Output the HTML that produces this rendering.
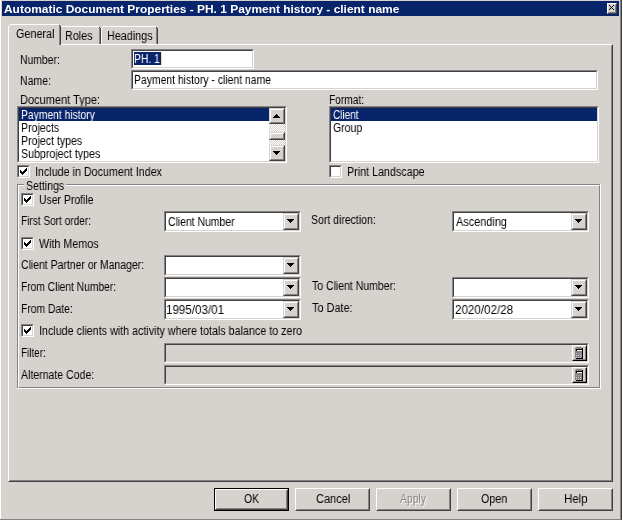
<!DOCTYPE html>
<html>
<head>
<meta charset="utf-8">
<title>Automatic Document Properties</title>
<style>
html,body{margin:0;padding:0;}
body{width:623px;height:520px;background:#d6d3ce;position:relative;overflow:hidden;
 font-family:"Liberation Sans",sans-serif;font-size:12px;color:#000;}
*{box-sizing:border-box;}
.abs,.t{position:absolute;}
.t{white-space:nowrap;line-height:16px;height:16px;transform-origin:0 0;will-change:transform;}
/* window frame */
#wl{left:0;top:0;width:1px;height:520px;background:#fff;}
#wt{left:0;top:0;width:623px;height:1px;background:#fff;}
#wr1{left:620px;top:0;width:1px;height:520px;background:#848284;}
#wr2{left:621px;top:0;width:1px;height:520px;background:#424142;}
#wb{left:0;top:519px;width:620px;height:1px;background:#848284;}
#title{left:2px;top:1px;width:617px;height:15px;background:#08246b;}
/* generic 3d */
.sunken{border:1px solid;border-color:#848284 #fff #fff #848284;background:#fff;}
.sunken:before{content:"";position:absolute;left:0;top:0;right:0;bottom:0;border:1px solid;border-color:#424142 #d6d3ce #d6d3ce #424142;}
.sunken.dis{background:#d6d3ce;}
.raised{border:1px solid;border-color:#fff #424142 #424142 #fff;background:#d6d3ce;}
.raised:before{content:"";position:absolute;left:0;top:0;right:0;bottom:0;border:1px solid;border-color:#d6d3ce #848284 #848284 #d6d3ce;}
.raised.blk{border-color:#fff #000 #000 #fff;}
.sbtn{border:1px solid;border-color:#d6d3ce #424142 #424142 #d6d3ce;background:#d6d3ce;}
.sbtn:before{content:"";position:absolute;left:0;top:0;right:0;bottom:0;border:1px solid;border-color:#fff #848284 #848284 #fff;}
.ar{position:absolute;left:3px;top:5px;display:block;}
.sel{background:#08246b;}
.chk{width:13px;height:13px;}
.chk svg{position:absolute;left:-1px;top:-1px;}
.cb{width:137px;height:21px;}
.cb .sbtn{left:118px;top:1px;width:16px;height:17px;}
</style>
</head>
<body>
<!-- frame -->
<div class="abs" id="wl"></div>
<div class="abs" style="left:622px;top:0;width:1px;height:520px;background:#fff;"></div><div class="abs" id="wr1"></div><div class="abs" id="wr2"></div><div class="abs" id="wb"></div>
<div class="abs" id="title"></div>
<span class="t" style="left:4.00px;top:1px;font-size:11px;transform:scaleX(1.0852);font-weight:bold;color:#fff;">Automatic Document Properties - PH. 1 Payment history - client name</span>
<!-- close button -->
<div class="abs raised" style="left:607px;top:3px;width:10px;height:11px;">
<svg class="abs" style="left:-1px;top:-1px" width="10" height="11" viewBox="0 0 10 11" shape-rendering="crispEdges"><path d="M2 2h1v1h-1zM3 3h1v1h-1zM4 4h1v1h-1zM5 5h1v1h-1zM6 6h1v1h-1zM6 2h1v1h-1zM5 3h1v1h-1zM3 5h1v1h-1zM2 6h1v1h-1z" fill="#000"/></svg>
</div>

<!-- tab pane -->
<div class="abs" style="left:8px;top:44px;width:605px;height:438px;border:1px solid;border-color:#fff #424142 #424142 #fff;"></div>
<div class="abs" style="left:9px;top:45px;width:603px;height:436px;border:1px solid;border-color:#d6d3ce #848284 #848284 #d6d3ce;"></div>
<!-- tabs -->
<div class="abs" style="left:9px;top:44px;width:50px;height:1px;background:#d6d3ce;"></div><div class="abs" style="left:10px;top:24px;width:49px;height:1px;background:#fff;"></div><div class="abs" style="left:9px;top:25px;width:1px;height:1px;background:#fff;"></div><div class="abs" style="left:8px;top:26px;width:1px;height:19px;background:#fff;"></div><div class="abs" style="left:59px;top:25px;width:1px;height:1px;background:#424142;"></div><div class="abs" style="left:59px;top:26px;width:1px;height:19px;background:#848284;"></div><div class="abs" style="left:60px;top:26px;width:1px;height:19px;background:#424142;"></div>
<div class="abs" style="left:61px;top:26px;width:38px;height:1px;background:#fff;"></div><div class="abs" style="left:99px;top:27px;width:1px;height:1px;background:#424142;"></div><div class="abs" style="left:99px;top:28px;width:1px;height:16px;background:#848284;"></div><div class="abs" style="left:100px;top:28px;width:1px;height:16px;background:#424142;"></div>
<div class="abs" style="left:101px;top:28px;width:1px;height:16px;background:#fff;"></div><div class="abs" style="left:102px;top:27px;width:1px;height:1px;background:#fff;"></div><div class="abs" style="left:103px;top:26px;width:53px;height:1px;background:#fff;"></div><div class="abs" style="left:156px;top:27px;width:1px;height:1px;background:#424142;"></div><div class="abs" style="left:156px;top:28px;width:1px;height:16px;background:#848284;"></div><div class="abs" style="left:157px;top:28px;width:1px;height:16px;background:#424142;"></div>
<span class="t" style="left:16.10px;top:26px;font-size:12px;transform:scaleX(0.9024);">General</span><span class="t" style="left:65.10px;top:28px;font-size:12px;transform:scaleX(0.8966);">Roles</span><span class="t" style="left:107.10px;top:28px;font-size:12px;transform:scaleX(0.8980);">Headings</span>

<!-- Number / Name -->
<span class="t" style="left:20.14px;top:52px;font-size:12px;transform:scaleX(0.8636);">Number:</span><span class="t" style="left:20.12px;top:73px;font-size:12px;transform:scaleX(0.8788);">Name:</span>
<div class="abs sunken" style="left:131px;top:49px;width:123px;height:20px;"></div>
<div class="abs sel" style="left:134px;top:52px;width:27px;height:13px;"></div>
<div class="abs" style="left:161px;top:52px;width:1px;height:13px;background:#f5db95;"></div>
<span class="t" style="left:134.14px;top:51px;font-size:12px;transform:scaleX(0.8621);color:#fff;">PH. 1</span>
<div class="abs sunken" style="left:131px;top:70px;width:467px;height:20px;"></div>
<span class="t" style="left:134.13px;top:72px;font-size:12px;transform:scaleX(0.8662);">Payment history - client name</span>

<!-- Document Type -->
<span class="t" style="left:20.08px;top:92px;font-size:12px;transform:scaleX(0.9176);">Document Type:</span>
<div class="abs sunken" style="left:17px;top:106px;width:270px;height:57px;"></div>
<div class="abs sel" style="left:19px;top:108px;width:250px;height:13px;"></div>
<div class="abs" style="left:0;top:0;width:269px;height:160px;overflow:hidden;"><span class="t" style="left:21.14px;top:107px;font-size:12px;transform:scaleX(0.8588);color:#fff;">Payment history</span><span class="t" style="left:21.12px;top:120px;font-size:12px;transform:scaleX(0.8810);">Projects</span><span class="t" style="left:21.12px;top:133px;font-size:12px;transform:scaleX(0.8824);">Project types</span><span class="t" style="left:21.11px;top:146px;font-size:12px;transform:scaleX(0.8864);">Subproject types</span></div>
<!-- scrollbar -->
<div class="abs" style="left:269px;top:108px;width:16px;height:53px;background:repeating-conic-gradient(#fff 0% 25%,#d6d3ce 0% 50%) 0 0/2px 2px;"></div>
<div class="abs sbtn" style="left:269px;top:108px;width:16px;height:16px;"><svg class="ar" width="7" height="4" viewBox="0 0 7 4" shape-rendering="crispEdges"><path d="M3 0h1v1h1v1h1v1h1v1h-7v-1h1v-1h1v-1h1z" fill="#000"/></svg></div>
<div class="abs sbtn" style="left:269px;top:132px;width:16px;height:8px;"></div>
<div class="abs sbtn" style="left:269px;top:145px;width:16px;height:16px;"><svg class="ar" width="7" height="4" viewBox="0 0 7 4" shape-rendering="crispEdges"><path d="M0 0h7v1h-1v1h-1v1h-1v1h-1v-1h-1v-1h-1v-1h-1z" fill="#000"/></svg></div>

<!-- Format -->
<span class="t" style="left:329.15px;top:92px;font-size:12px;transform:scaleX(0.8462);">Format:</span>
<div class="abs sunken" style="left:329px;top:106px;width:270px;height:57px;"></div>
<div class="abs sel" style="left:331px;top:108px;width:266px;height:13px;"></div>
<span class="t" style="left:333.17px;top:107px;font-size:12px;transform:scaleX(0.8333);color:#fff;">Client</span><span class="t" style="left:333.12px;top:120px;font-size:12px;transform:scaleX(0.8750);">Group</span>

<!-- checkboxes -->
<div class="abs sunken chk" style="left:17px;top:165px;"><svg width="13" height="13" viewBox="0 0 13 13" shape-rendering="crispEdges"><path d="M3 5h1v1h1v1h1v-1h1v-1h1v-1h1v-1h1v3h-1v1h-1v1h-1v1h-1v1h-1v-1h-1v-1h-1z" fill="#000"/></svg></div>
<span class="t" style="left:35.11px;top:164px;font-size:12px;transform:scaleX(0.8936);">Include in Document Index</span>
<div class="abs sunken chk" style="left:329px;top:165px;"></div>
<span class="t" style="left:347.11px;top:164px;font-size:12px;transform:scaleX(0.8941);">Print Landscape</span>

<!-- group box -->
<div class="abs" style="left:17px;top:184px;width:584px;height:205px;border:1px solid;border-color:#848284 #fff #fff #848284;"></div>
<div class="abs" style="left:18px;top:185px;width:582px;height:203px;border:1px solid;border-color:#fff #848284 #848284 #fff;"></div>
<div class="abs" style="left:600px;top:184px;width:1px;height:1px;background:#fff;"></div><div class="abs" style="left:17px;top:388px;width:1px;height:1px;background:#fff;"></div>
<div class="abs" style="left:24px;top:184px;width:42px;height:2px;background:#d6d3ce;"></div>
<span class="t" style="left:26.12px;top:178px;font-size:12px;transform:scaleX(0.8810);">Settings</span>

<div class="abs sunken chk" style="left:21px;top:193px;"><svg width="13" height="13" viewBox="0 0 13 13" shape-rendering="crispEdges"><path d="M3 5h1v1h1v1h1v-1h1v-1h1v-1h1v-1h1v3h-1v1h-1v1h-1v1h-1v1h-1v-1h-1v-1h-1z" fill="#000"/></svg></div>
<span class="t" style="left:39.13px;top:192px;font-size:12px;transform:scaleX(0.8689);">User Profile</span>

<span class="t" style="left:21.16px;top:213px;font-size:12px;transform:scaleX(0.8395);">First Sort order:</span>
<div class="abs sunken cb" style="left:164px;top:211px;"><div class="abs sbtn"><svg class="ar" width="7" height="4" viewBox="0 0 7 4" shape-rendering="crispEdges"><path d="M0 0h7v1h-1v1h-1v1h-1v1h-1v-1h-1v-1h-1v-1h-1z" fill="#000"/></svg></div></div>
<span class="t" style="left:168.13px;top:214px;font-size:12px;transform:scaleX(0.8684);">Client Number</span>
<span class="t" style="left:311.12px;top:212px;font-size:12px;transform:scaleX(0.8750);">Sort direction:</span>
<div class="abs sunken cb" style="left:452px;top:211px;"><div class="abs sbtn"><svg class="ar" width="7" height="4" viewBox="0 0 7 4" shape-rendering="crispEdges"><path d="M0 0h7v1h-1v1h-1v1h-1v1h-1v-1h-1v-1h-1v-1h-1z" fill="#000"/></svg></div></div>
<span class="t" style="left:456.00px;top:214px;font-size:12px;transform:scaleX(0.9091);">Ascending</span>

<div class="abs sunken chk" style="left:21px;top:237px;"><svg width="13" height="13" viewBox="0 0 13 13" shape-rendering="crispEdges"><path d="M3 5h1v1h1v1h1v-1h1v-1h1v-1h1v-1h1v3h-1v1h-1v1h-1v1h-1v1h-1v-1h-1v-1h-1z" fill="#000"/></svg></div>
<span class="t" style="left:39.00px;top:236px;font-size:12px;transform:scaleX(0.8939);">With Memos</span>

<span class="t" style="left:21.13px;top:257px;font-size:12px;transform:scaleX(0.8705);">Client Partner or Manager:</span>
<div class="abs sunken cb" style="left:164px;top:255px;"><div class="abs sbtn"><svg class="ar" width="7" height="4" viewBox="0 0 7 4" shape-rendering="crispEdges"><path d="M0 0h7v1h-1v1h-1v1h-1v1h-1v-1h-1v-1h-1v-1h-1z" fill="#000"/></svg></div></div>

<span class="t" style="left:21.15px;top:279px;font-size:12px;transform:scaleX(0.8532);">From Client Number:</span>
<div class="abs sunken cb" style="left:164px;top:277px;"><div class="abs sbtn"><svg class="ar" width="7" height="4" viewBox="0 0 7 4" shape-rendering="crispEdges"><path d="M0 0h7v1h-1v1h-1v1h-1v1h-1v-1h-1v-1h-1v-1h-1z" fill="#000"/></svg></div></div>
<span class="t" style="left:312.00px;top:278px;font-size:12px;transform:scaleX(0.8737);">To Client Number:</span>
<div class="abs sunken cb" style="left:452px;top:277px;"><div class="abs sbtn"><svg class="ar" width="7" height="4" viewBox="0 0 7 4" shape-rendering="crispEdges"><path d="M0 0h7v1h-1v1h-1v1h-1v1h-1v-1h-1v-1h-1v-1h-1z" fill="#000"/></svg></div></div>

<span class="t" style="left:21.14px;top:301px;font-size:12px;transform:scaleX(0.8621);">From Date:</span>
<div class="abs sunken cb" style="left:164px;top:299px;"><div class="abs sbtn"><svg class="ar" width="7" height="4" viewBox="0 0 7 4" shape-rendering="crispEdges"><path d="M0 0h7v1h-1v1h-1v1h-1v1h-1v-1h-1v-1h-1v-1h-1z" fill="#000"/></svg></div></div>
<span class="t" style="left:166.03px;top:302px;font-size:12px;transform:scaleX(0.9661);">1995/03/01</span>
<span class="t" style="left:312.00px;top:300px;font-size:12px;transform:scaleX(0.9091);">To Date:</span>
<div class="abs sunken cb" style="left:452px;top:299px;"><div class="abs sbtn"><svg class="ar" width="7" height="4" viewBox="0 0 7 4" shape-rendering="crispEdges"><path d="M0 0h7v1h-1v1h-1v1h-1v1h-1v-1h-1v-1h-1v-1h-1z" fill="#000"/></svg></div></div>
<span class="t" style="left:455.03px;top:302px;font-size:12px;transform:scaleX(0.9661);">2020/02/28</span>

<div class="abs sunken chk" style="left:21px;top:324px;"><svg width="13" height="13" viewBox="0 0 13 13" shape-rendering="crispEdges"><path d="M3 5h1v1h1v1h1v-1h1v-1h1v-1h1v-1h1v3h-1v1h-1v1h-1v1h-1v1h-1v-1h-1v-1h-1z" fill="#000"/></svg></div>
<span class="t" style="left:39.11px;top:323px;font-size:12px;transform:scaleX(0.8942);">Include clients with activity where totals balance to zero</span>

<span class="t" style="left:21.18px;top:345px;font-size:12px;transform:scaleX(0.8214);">Filter:</span>
<div class="abs sunken dis" style="left:164px;top:343px;width:425px;height:20px;"><div class="abs raised blk" style="left:407px;top:1px;width:15px;height:16px;"><svg class="abs" style="left:-1px;top:-1px" width="15" height="16" viewBox="0 0 15 16" shape-rendering="crispEdges"><path d="M4 2h6v1h1v11h-7v-1h-1v-10h1z" fill="#848284"/><path d="M10 3h1v11h-7v-1h6z" fill="#000"/><path d="M4 4h6v1h-5v1h-1z" fill="#000"/><path d="M5 5h5v1h-5z" fill="#fff"/><path d="M4 8h1v1h-1zM6 8h1v1h-1zM8 8h1v1h-1z" fill="#a8a8a8"/><path d="M4 10h1v1h-1zM6 10h1v1h-1zM8 10h1v1h-1zM4 12h1v1h-1zM6 12h1v1h-1zM8 12h1v1h-1z" fill="#d6d3ce"/></svg></div></div>
<span class="t" style="left:21.00px;top:367px;font-size:12px;transform:scaleX(0.8780);">Alternate Code:</span>
<div class="abs sunken dis" style="left:164px;top:365px;width:425px;height:20px;"><div class="abs raised blk" style="left:407px;top:1px;width:15px;height:16px;"><svg class="abs" style="left:-1px;top:-1px" width="15" height="16" viewBox="0 0 15 16" shape-rendering="crispEdges"><path d="M4 2h6v1h1v11h-7v-1h-1v-10h1z" fill="#848284"/><path d="M10 3h1v11h-7v-1h6z" fill="#000"/><path d="M4 4h6v1h-5v1h-1z" fill="#000"/><path d="M5 5h5v1h-5z" fill="#fff"/><path d="M4 8h1v1h-1zM6 8h1v1h-1zM8 8h1v1h-1z" fill="#a8a8a8"/><path d="M4 10h1v1h-1zM6 10h1v1h-1zM8 10h1v1h-1zM4 12h1v1h-1zM6 12h1v1h-1zM8 12h1v1h-1z" fill="#d6d3ce"/></svg></div></div>

<!-- buttons -->
<div class="abs" style="left:214px;top:488px;width:75px;height:23px;border:1px solid #000;"></div>
<div class="abs raised" style="left:215px;top:489px;width:73px;height:21px;"></div>
<div class="abs raised" style="left:295px;top:488px;width:75px;height:23px;"></div>
<div class="abs raised" style="left:376px;top:488px;width:75px;height:23px;"></div>
<div class="abs raised" style="left:457px;top:488px;width:75px;height:23px;"></div>
<div class="abs raised" style="left:538px;top:488px;width:75px;height:23px;"></div>
<span class="t" style="left:244.12px;top:491px;font-size:12px;transform:scaleX(0.8750);">OK</span><span class="t" style="left:316.08px;top:491px;font-size:12px;transform:scaleX(0.9167);">Cancel</span><span class="t" style="left:400.00px;top:491px;font-size:12px;transform:scaleX(0.8667);color:#848284;text-shadow:1px 1px 0 #fff;">Apply</span><span class="t" style="left:481.11px;top:491px;font-size:12px;transform:scaleX(0.8929);">Open</span><span class="t" style="left:564.04px;top:491px;font-size:12px;transform:scaleX(0.9565);">Help</span>
</body>
</html>
